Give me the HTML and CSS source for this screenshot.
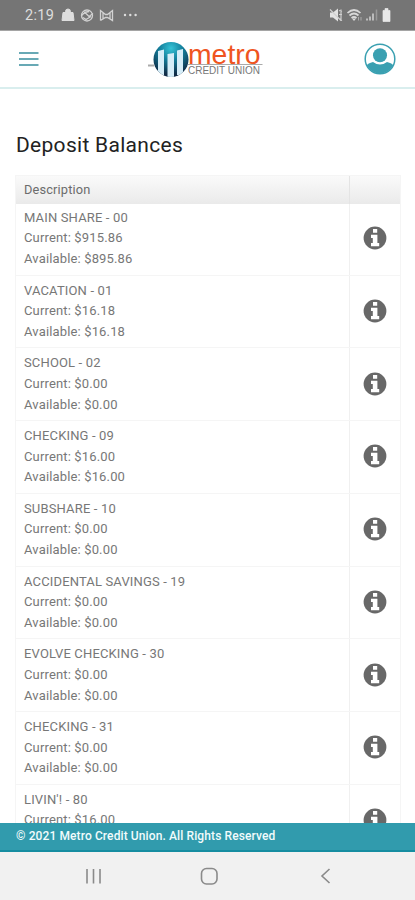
FILE: index.html
```html
<!DOCTYPE html>
<html lang="en">
<head>
<meta charset="utf-8">
<title>Metro Credit Union</title>
<link rel="stylesheet" href="styles.css">
</head>
<body>
<svg class="defs" aria-hidden="true">
  <symbol id="info" viewBox="0 0 24 24">
    <circle cx="12" cy="12" r="11.400" fill="#686868"/>
    <path d="M10 3h4.200v3.700H10zM8 8.700h6.400v8.300h1.800v3.200H8V17h1.800v-5H8z" fill="#fff"/>
  </symbol>
</svg>
<div class="status">
  <span class="clock">2:19</span>
  <svg class="status-left" viewBox="0 0 80 16">
    <path d="M2 5.500h10l1 8H1zM4.500 5.500V4.500a2.500 2.500 0 0 1 5 0v1" fill="#dedede" stroke="#dedede"/>
    <g fill="none" stroke="#d2d2d2" stroke-width="1.300">
      <circle cx="26" cy="8.500" r="5.500"/>
      <path d="M21 8.500q2-4 5-1l2 2 4-3M22 10.500l3 2 5-3M23 5.500l5-1"/>
      <path d="M39.500 13.500v-10l5 4h2l5-4v10l-5-3h-2l-5 3M42 5.500v6M49 5.500v6"/>
    </g>
    <g fill="#dedede"><circle cx="64" cy="8" r="1.200"/><circle cx="69.300" cy="8" r="1.200"/><circle cx="74.600" cy="8" r="1.200"/></g>
  </svg>
  <svg class="status-right" viewBox="0 0 64 16">
    <path d="M1 5.500h3l5-4v13l-5-4H1z" fill="#e2e2e2"/>
    <path d="M1 2.500l11 11M10 3.500l3 1M10 7.500h3M10 11.500l3 2M12 2.500v11" fill="none" stroke="#d0d0d0" stroke-width="1.200"/>
    <path d="M18.500 6q6.500-6 13 0M20.500 8.500q4.500-4 9 0M22.500 11q2.500-2 5 0" fill="none" stroke="#d8d8d8" stroke-width="1.700"/>
    <path d="M23 11.500h4l-2 2.500z" fill="#ddd"/>
    <path d="M29.500 13.500V10M32 10v3.500" stroke="#aaa"/>
    <path d="M38 13.500v-2M41 13.500V9.500M44 13.500V6.500" stroke="#d4d4d4" stroke-width="1.500"/>
    <path d="M47.500 13.500V2.500" stroke="#999" stroke-width="1.500"/>
    <path d="M54 3.500h2v-2h3v2h2v11h-7z" fill="#e8e8e8" stroke="#e8e8e8" stroke-width=".7"/>
  </svg>
</div>
<header class="header">
  <svg class="menu" viewBox="0 0 20 16"><path d="M0 2h19.500M0 8h19.500M0 14h19.500" stroke="#68a9b5" stroke-width="2.200"/></svg>
  <svg class="logo" viewBox="0 0 118 40">
    <defs>
      <radialGradient id="globe" cx=".5" cy=".18" r=".75"><stop offset="0" stop-color="#35c3d6"/><stop offset=".45" stop-color="#137e9b"/><stop offset="1" stop-color="#102b46"/></radialGradient>
      <clipPath id="disc"><circle cx="23" cy="20.500" r="17.500"/></clipPath>
    </defs>
    <path d="M0 26.500h6" stroke="#aaa" stroke-width="2"/>
    <path d="M40 25.500h74.500" stroke="#aaa" stroke-width="1.200"/>
    <circle cx="23" cy="20.500" r="17.500" fill="url(#globe)"/>
    <g clip-path="url(#disc)" fill="#d5edf8"><path d="M10 12l6-1.500V36h-6zM19.500 15l6.500-1v25h-6.500zM29 11.500l6-1.500V36h-6z"/></g>
    <text class="logo-name" x="40" y="24.500" textLength="72.500" lengthAdjust="spacingAndGlyphs">metro</text>
    <text class="logo-sub" x="40" y="34.500" textLength="72" lengthAdjust="spacingAndGlyphs">CREDIT UNION</text>
  </svg>
  <svg class="avatar" viewBox="0 0 32 32">
    <defs><clipPath id="face"><circle cx="16" cy="16" r="14.500"/></clipPath></defs>
    <circle cx="16" cy="16" r="14.800" fill="#fff" stroke="#3aa0b1" stroke-width="1.500"/>
    <g clip-path="url(#face)" fill="#3aa0b1"><circle cx="16" cy="12.200" r="7"/><path d="M2 23q2-3 7-4 7 5 14 0 5 1 7 4v9H2z"/></g>
  </svg>
</header>
<main class="content">
  <h1 class="title">Deposit Balances</h1>
  <div class="table">
    <div class="thead"><div class="desc">Description</div><div class="action"></div></div>
    <div class="row first"><div class="desc">MAIN SHARE - 00<br>Current: $915.86<br>Available: $895.86</div><div class="action"><svg class="info"><use href="#info"/></svg></div></div>
    <div class="row"><div class="desc">VACATION - 01<br>Current: $16.18<br>Available: $16.18</div><div class="action"><svg class="info"><use href="#info"/></svg></div></div>
    <div class="row"><div class="desc">SCHOOL - 02<br>Current: $0.00<br>Available: $0.00</div><div class="action"><svg class="info"><use href="#info"/></svg></div></div>
    <div class="row"><div class="desc">CHECKING - 09<br>Current: $16.00<br>Available: $16.00</div><div class="action"><svg class="info"><use href="#info"/></svg></div></div>
    <div class="row"><div class="desc">SUBSHARE - 10<br>Current: $0.00<br>Available: $0.00</div><div class="action"><svg class="info"><use href="#info"/></svg></div></div>
    <div class="row"><div class="desc">ACCIDENTAL SAVINGS - 19<br>Current: $0.00<br>Available: $0.00</div><div class="action"><svg class="info"><use href="#info"/></svg></div></div>
    <div class="row"><div class="desc">EVOLVE CHECKING - 30<br>Current: $0.00<br>Available: $0.00</div><div class="action"><svg class="info"><use href="#info"/></svg></div></div>
    <div class="row"><div class="desc">CHECKING - 31<br>Current: $0.00<br>Available: $0.00</div><div class="action"><svg class="info"><use href="#info"/></svg></div></div>
    <div class="row"><div class="desc">LIVIN'! - 80<br>Current: $16.00</div><div class="action"><svg class="info"><use href="#info"/></svg></div></div>
  </div>
</main>
<footer class="footer">© 2021 Metro Credit Union. All Rights Reserved</footer>
<nav class="nav">
  <svg viewBox="0 0 415 48" fill="none" stroke="#8a8a8a" stroke-width="1.600">
    <path d="M87 17v14.500M93.500 17v14.500M100 17v14.500"/>
    <rect x="201.500" y="16.500" width="15.500" height="15.500" rx="5"/>
    <path d="M329.500 17l-7.500 7 7.500 7"/>
  </svg>
</nav>
</body>
</html>
```
FILE: styles.css
```css
* { box-sizing: border-box; }
body {
  margin: 0;
  height: 900px;
  display: flex;
  flex-direction: column;
  overflow: hidden;
  background: #fff;
  font-family: Roboto, "Liberation Sans", sans-serif;
}
svg { display: block; flex: none; }
.defs { width: 0; height: 0; }
.status {
  flex: none;
  height: 31px;
  display: flex;
  align-items: center;
  padding: 0 22px 0 25px;
  background: #757575;
  border-bottom: 1px solid #a5a5a5;
  color: #dedede;
}
.clock { width: 36px; font-size: 14.5px; letter-spacing: .3px; line-height: 16px; padding-top: 2px; }
.status-left { width: 80px; height: 16px; }
.status-right { width: 64px; height: 16px; margin-left: auto; }
.header {
  flex: none;
  height: 58px;
  display: flex;
  align-items: center;
  justify-content: space-between;
  padding: 0 19px 0;
  border-bottom: 2px solid #d9eeee;
}
.menu { width: 20px; height: 16px; }
.logo { width: 118px; height: 40px; margin-left: 11px; }
.logo-name { font: 28px "Liberation Sans", sans-serif; fill: #ef5421; }
.logo-sub { font: 10px "Liberation Sans", sans-serif; fill: #777; }
.avatar { width: 32px; height: 32px; }
.content { flex: 1; min-height: 0; overflow: hidden; padding: 44px 14px 0 15px; }
.title { margin: 0 0 17px; font-size: 21px; line-height: 25px; font-weight: 400; letter-spacing: .3px; color: #222; padding-left: 1px; }
.table { border: 1px solid #f5f5f5; }
.thead, .row { display: flex; }
.thead { height: 28px; background: linear-gradient(#fafafa, #eaeaea); font-size: 12.8px; line-height: 27px; letter-spacing: .15px; color: #6c6c6c; }
.desc { flex: 1; padding-left: 8px; border-right: 1px solid #f0f0f0; }
.thead .desc { border-color: #e4e4e4; }
.action { width: 50px; padding-right: 1px; display: flex; align-items: center; justify-content: center; }
.row { height: 72.75px; border-bottom: 1px solid #f5f5f5; font-size: 13px; line-height: 20.7px; letter-spacing: .15px; color: #777; }
.row .desc { padding-top: 5px; }
.row .action { padding-bottom: 1px; }
.row.first { height: 71.5px; }
.first .desc { padding-top: 3.7px; }
.first .action { padding-bottom: 3px; }
.info { width: 24px; height: 24px; }
.footer {
  flex: none;
  height: 29px;
  padding-left: 16px;
  background: #319bad;
  border-bottom: 2px solid #168da1;
  color: #f2fbfc;
  font-size: 12px;
  font-weight: 500;
  letter-spacing: .11px;
  line-height: 26px;
}
.nav { flex: none; height: 48px; background: #f1f1f1; }
.nav svg { width: 415px; height: 48px; }
```
